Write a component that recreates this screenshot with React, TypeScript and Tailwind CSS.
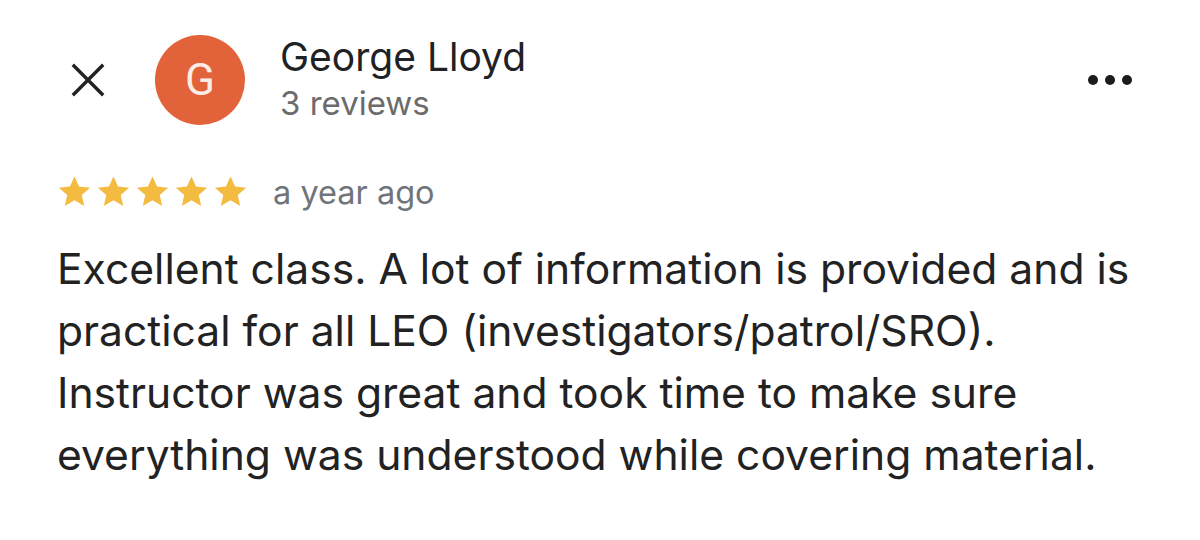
import React from "react";

const Star = () => (
  <svg viewBox="0 0 24 24" className="w-[37px] h-[37px]" fill="#F4BB41">
    <path d="M12 2.2l2.95 6.6 7.2.7-5.45 4.8 1.6 7.05L12 17.7l-6.3 3.65 1.6-7.05L1.85 9.5l7.2-.7z" />
  </svg>
);

const App = () => {
  return (
    <div className="w-[1200px] h-[540px] bg-white font-['Inter',sans-serif] text-[#202124] overflow-hidden">
      <div className="flex items-start pt-[35px] pl-[68px] pr-[68px]">
        <div className="w-[40px] h-[90px] flex items-center justify-center">
          <svg viewBox="0 0 40 40" className="w-[38px] h-[38px]" stroke="#222" strokeWidth="3.6" strokeLinecap="butt">
            <path d="M4 4L36 36M36 4L4 36" />
          </svg>
        </div>
        <div className="ml-[47px] w-[90px] h-[90px] rounded-full bg-[#E2623A] flex items-center justify-center font-['Roboto',sans-serif] text-[44px] text-[#fbece5] leading-none">
          G
        </div>
        <div className="ml-[35px] flex flex-col">
          <div className="text-[39px] leading-[46px] -mt-[1px]">George Lloyd</div>
          <div className="text-[33px] leading-[40px] mt-[3px] text-[#6b6b6b]">3 reviews</div>
        </div>
        <div className="ml-auto mt-[40px] flex gap-[7px]">
          <span className="w-[10px] h-[10px] rounded-full bg-[#1c1c1c]" />
          <span className="w-[10px] h-[10px] rounded-full bg-[#1c1c1c]" />
          <span className="w-[10px] h-[10px] rounded-full bg-[#1c1c1c]" />
        </div>
      </div>
      <div className="flex items-center pl-[56px] mt-[48px]">
        <div className="flex gap-[2px]">
          <Star />
          <Star />
          <Star />
          <Star />
          <Star />
        </div>
        <span className="ml-[24px] mt-[4px] text-[32.5px] text-[#70757a] leading-none">a year ago</span>
      </div>
      <p className="pl-[57px] pr-[30px] mt-[28px] text-[42.6px] leading-[62px] text-[#222]">
        Excellent class. A lot of information is provided and is practical for all LEO (investigators/patrol/SRO). Instructor was great and took time to make sure everything was understood while covering material.
      </p>
    </div>
  );
};

export default App;
